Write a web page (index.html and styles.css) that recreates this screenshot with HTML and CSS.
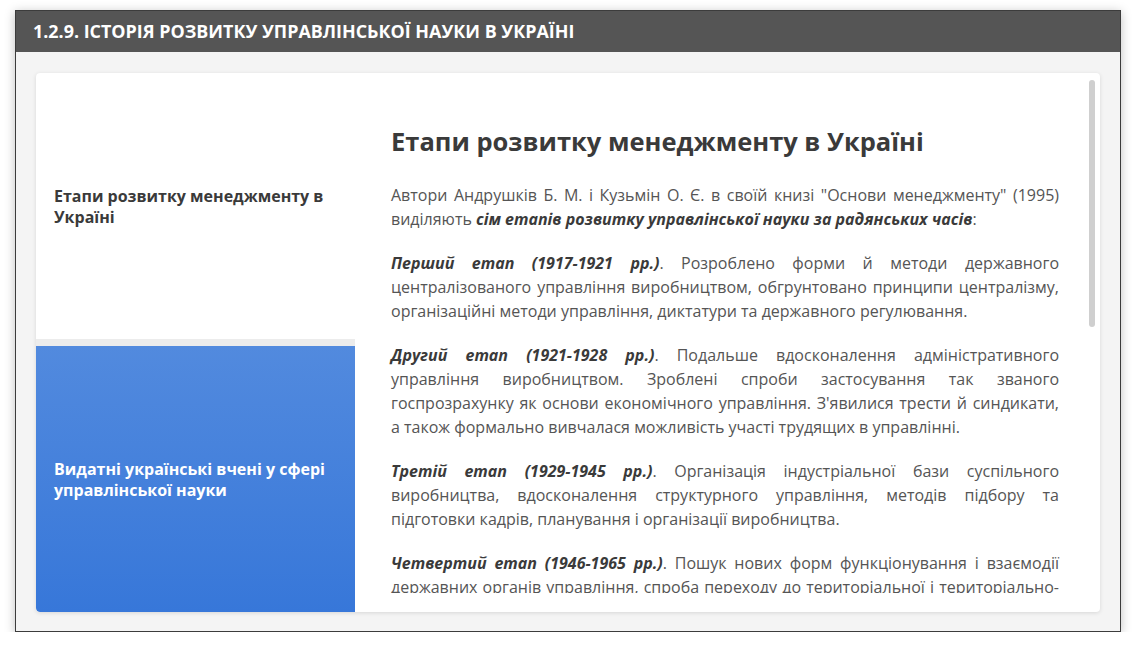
FILE: index.html
```html
<!DOCTYPE html>
<html lang="uk">
<head>
<meta charset="utf-8">
<link rel="stylesheet" href="styles.css">
</head>
<body>
<div class="window">
  <div class="window-header">1.2.9. ІСТОРІЯ РОЗВИТКУ УПРАВЛІНСЬКОЇ НАУКИ В УКРАЇНІ</div>
  <div class="window-body">
    <div class="card">
      <div class="tabs">
        <div class="tab tab-active">Етапи розвитку менеджменту в Україні</div>
        <div class="tab tab-blue">Видатні українські вчені у сфері управлінської науки</div>
      </div>
      <div class="content">
        <h1>Етапи розвитку менеджменту в Україні</h1>
        <p>Автори Андрушків Б. М. і Кузьмін О. Є. в своїй книзі "Основи менеджменту" (1995) виділяють <b><i>сім етапів розвитку управлінської науки за радянських часів</i></b>:</p>
        <p><b><i>Перший етап (1917-1921 рр.)</i></b>. Розроблено форми й методи державного централізованого управління виробництвом, обгрунтовано принципи централізму, організаційні методи управління, диктатури та державного регулювання.</p>
        <p><b><i>Другий етап (1921-1928 рр.)</i></b>. Подальше вдосконалення адміністративного управління виробництвом. Зроблені спроби застосування так званого госпрозрахунку як основи економічного управління. З'явилися трести й синдикати, а також формально вивчалася можливість участі трудящих в управлінні.</p>
        <p><b><i>Третій етап (1929-1945 рр.)</i></b>. Організація індустріальної бази суспільного виробництва, вдосконалення структурного управління, методів підбору та підготовки кадрів, планування і організації виробництва.</p>
        <p><b><i>Четвертий етап (1946-1965 рр.)</i></b>. Пошук нових форм функціонування і взаємодії державних органів управління, спроба переходу до територіальної і територіально-галузевої системи управління (раднаргоспи), розширення прав підприємств.</p>
        <p><b><i>П'ятий етап (1965-1985 рр.)</i></b>. Спроба впровадження економічних методів управління, господарська реформа 1965 року, створення виробничих і науково-виробничих об'єднань.</p>
      </div>
      <div class="scroll-thumb"></div>
    </div>
  </div>
</div>
</body>
</html>
```

FILE: styles.css
```css
html, body {
  margin: 0;
  padding: 0;
  background: #ffffff;
}
body {
  font-family: "Open Sans", "Noto Sans", sans-serif;
  padding: 10px 15px 0 15px;
}
.window {
  width: 1104px;
  height: 620px;
  border: 1px solid #3c3c3c;
  box-shadow: 0 2px 10px rgba(0,0,0,0.25);
  display: flex;
  flex-direction: column;
  background: #f4f4f4;
}
.window-header {
  height: 41px;
  background: #555555;
  color: #ffffff;
  font-weight: 700;
  font-size: 17.9px;
  line-height: 41px;
  padding-left: 17px;
}
.window-body {
  flex: 1;
  display: flex;
  padding: 21px 20px 19px 20px;
  min-height: 0;
}
.card {
  position: relative;
  flex: 1;
  display: flex;
  background: #ffffff;
  border-radius: 4px;
  box-shadow: 0 1px 4px rgba(0,0,0,0.12);
  min-height: 0;
  overflow: hidden;
}
.tabs {
  width: 319px;
  flex: none;
  display: flex;
  flex-direction: column;
  gap: 7px;
  background: #ececec;
}
.tab {
  flex: 1;
  display: flex;
  align-items: center;
  padding: 2px 30px 0 18px;
  font-size: 16px;
  font-weight: 700;
  line-height: 21px;
}
.tab-active {
  background: #ffffff;
  color: #3a3a3a;
  border-radius: 4px 0 0 0;
}
.tab-blue {
  background: linear-gradient(to bottom, #528ade, #3777d9);
  color: #ffffff;
  border-radius: 0 0 0 4px;
}
.content {
  flex: 1;
  overflow: hidden;
  padding: 50px 41px 0 36px;
  margin-bottom: 19px;
  color: #555555;
  font-size: 16px;
  line-height: 24px;
}
.scroll-thumb {
  position: absolute;
  top: 7px;
  right: 5px;
  width: 6px;
  height: 247px;
  border-radius: 3px;
  background: #cfcfcf;
}
.content h1 {
  margin: 0 0 24px 0;
  font-size: 25.5px;
  line-height: 36px;
  color: #3a3a3a;
  font-weight: 700;
}
.content p {
  margin: 0 0 20px 0;
  text-align: justify;
}
.content b {
  color: #3a3a3a;
}
```
